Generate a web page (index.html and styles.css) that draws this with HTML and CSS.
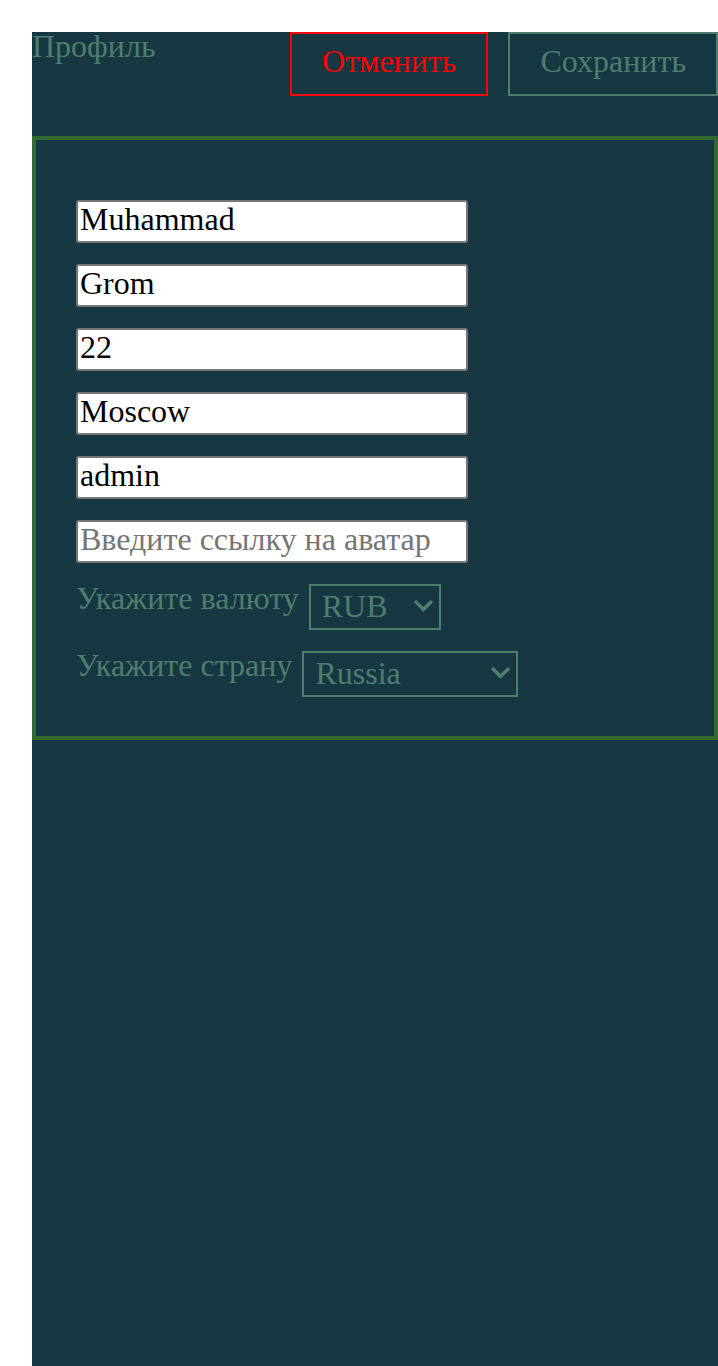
FILE: index.html
```html
<!DOCTYPE html>
<html lang="ru">
<head>
<meta charset="utf-8">
<title>Профиль</title>
<link rel="stylesheet" href="styles.css">
</head>
<body>
<div class="page">
  <div class="profile">
    <header class="profile-header">
      <div class="profile-title">Профиль</div>
      <div class="actions">
        <button class="btn btn-cancel" type="button">Отменить</button>
        <button class="btn btn-save" type="button">Сохранить</button>
      </div>
    </header>
    <form class="profile-form">
      <input class="field" type="text" value="Muhammad">
      <input class="field" type="text" value="Grom">
      <input class="field" type="text" value="22">
      <input class="field" type="text" value="Moscow">
      <input class="field" type="text" value="admin">
      <input class="field" type="text" placeholder="Введите ссылку на аватар">
      <div class="select-row">
        <label class="select-label">Укажите валюту</label>
        <div class="select-wrap">
          <select class="select select-currency">
            <option>RUB</option>
            <option>USD</option>
            <option>EUR</option>
          </select>
          <svg class="chevron" width="19" height="12" viewBox="0 0 19 12" aria-hidden="true"><polyline points="2,2 9.5,9.5 17,2" fill="none" stroke="#4e7e6e" stroke-width="3.5" stroke-linecap="round" stroke-linejoin="round"/></svg>
        </div>
      </div>
      <div class="select-row">
        <label class="select-label">Укажите страну</label>
        <div class="select-wrap">
          <select class="select select-country">
            <option>Russia</option>
            <option>USA</option>
            <option>Germany</option>
          </select>
          <svg class="chevron" width="19" height="12" viewBox="0 0 19 12" aria-hidden="true"><polyline points="2,2 9.5,9.5 17,2" fill="none" stroke="#4e7e6e" stroke-width="3.5" stroke-linecap="round" stroke-linejoin="round"/></svg>
        </div>
      </div>
    </form>
  </div>
</div>
</body>
</html>
```

FILE: styles.css
```css
html, body {
  margin: 0;
  padding: 0;
  background: #ffffff;
}

body {
  font-family: "Liberation Serif", "Times New Roman", serif;
  overflow: hidden;
}

.page {
  padding: 32px 0 0 32px;
}

.profile {
  background: #173743;
  min-height: 1334px;
  color: #4e7e6e;
}

.profile-header {
  display: flex;
  justify-content: space-between;
  align-items: flex-start;
  height: 64px;
  margin-bottom: 40px;
}

.profile-title {
  font-size: 32px;
  line-height: 29px;
}

.actions {
  display: flex;
  gap: 20px;
}

.btn {
  font-family: "Liberation Serif", "Times New Roman", serif;
  font-size: 32px;
  line-height: 36px;
  height: 64px;
  padding: 0 30px 6px;
  background: transparent;
  box-sizing: border-box;
  cursor: pointer;
}

.btn-cancel {
  border: 2px solid #ff0000;
  color: #ff0000;
}

.btn-save {
  border: 2px solid #4e7e6e;
  color: #4e7e6e;
}

.profile-form {
  margin: 0;
  border: 4px solid #336a2f;
  padding: 60px 40px 39px 40px;
  display: flex;
  flex-direction: column;
  align-items: flex-start;
  gap: 21px;
}

.field {
  font-family: "Liberation Serif", "Times New Roman", serif;
  font-size: 32px;
  color: #000000;
  background: #ffffff;
  width: 392px;
  height: 43px;
  box-sizing: border-box;
  margin: 0;
  border: 2px solid #767676;
  border-radius: 3px;
  padding: 0 2px 4px;
}

.field::placeholder {
  color: #757575;
}

.select-row {
  display: flex;
  align-items: flex-start;
  gap: 10px;
}

.select-label {
  font-size: 32px;
  line-height: 28px;
}

.select-wrap {
  position: relative;
  display: flex;
}

.select {
  font-family: "Liberation Serif", "Times New Roman", serif;
  font-size: 32px;
  color: #4e7e6e;
  background: transparent;
  border: 2px solid #4e7e6e;
  border-radius: 0;
  height: 46px;
  padding: 0 30px 2px 11px;
  margin: 0;
  box-sizing: border-box;
  appearance: none;
  -webkit-appearance: none;
  outline: none;
}

.chevron {
  position: absolute;
  right: 8px;
  top: 16px;
  pointer-events: none;
}

.select-currency {
  width: 132px;
}

.select-country {
  width: 216px;
}
```
